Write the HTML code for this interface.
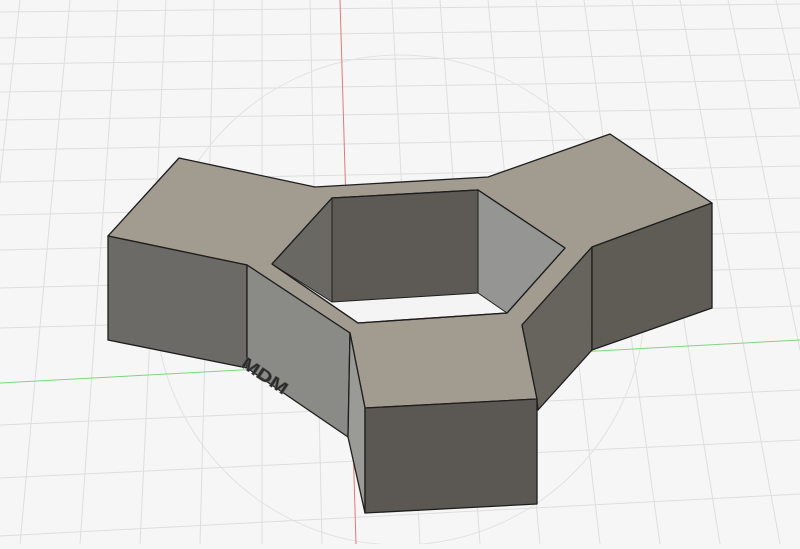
<!DOCTYPE html><html><head><style>html,body{margin:0;padding:0;background:#f5f5f5;overflow:hidden}</style></head><body>
<svg width="800" height="544" viewBox="0 0 800 544" xmlns="http://www.w3.org/2000/svg">
<rect width="800" height="544" fill="#f6f6f6"/>
<g stroke="#dedede" stroke-width="1">
<line x1="0" y1="12" x2="800" y2="4"/><line x1="0" y1="38" x2="800" y2="28"/><line x1="0" y1="64" x2="800" y2="54"/><line x1="0" y1="92" x2="800" y2="80"/><line x1="0" y1="120" x2="800" y2="108"/><line x1="0" y1="150" x2="800" y2="136"/><line x1="0" y1="182" x2="800" y2="166"/><line x1="0" y1="215" x2="800" y2="198"/><line x1="0" y1="250" x2="800" y2="232"/><line x1="0" y1="288" x2="800" y2="268"/><line x1="0" y1="328" x2="800" y2="306"/><line x1="0" y1="425" x2="800" y2="390"/><line x1="0" y1="478" x2="800" y2="440"/><line x1="0" y1="536" x2="800" y2="494"/>
<line x1="20" y1="0" x2="-40" y2="544"/><line x1="70" y1="0" x2="20" y2="544"/><line x1="118" y1="0" x2="80" y2="544"/><line x1="166" y1="0" x2="140" y2="544"/><line x1="214" y1="0" x2="200" y2="544"/><line x1="262" y1="0" x2="262" y2="544"/><line x1="310" y1="0" x2="322" y2="544"/><line x1="392" y1="0" x2="420" y2="544"/><line x1="440" y1="0" x2="480" y2="544"/><line x1="488" y1="0" x2="540" y2="544"/><line x1="536" y1="0" x2="600" y2="544"/><line x1="584" y1="0" x2="660" y2="544"/><line x1="632" y1="0" x2="720" y2="544"/><line x1="680" y1="0" x2="780" y2="544"/><line x1="728" y1="0" x2="840" y2="544"/><line x1="776" y1="0" x2="900" y2="544"/>
</g>
<circle cx="400" cy="300" r="245" fill="none" stroke="#e2e2e2" stroke-width="1"/>
<line x1="340" y1="0" x2="356" y2="544" stroke="#e07a7a" stroke-width="1"/>
<line x1="0" y1="383" x2="800" y2="340" stroke="#7fd67f" stroke-width="1"/>
<g stroke="#1e1e1e" stroke-width="1.3" stroke-linejoin="round">
<polygon points="179,158 315,187 488,177 610,134 712,203 592,247 522,325 537,399 365,408 350,333 247,265 108,236" fill="#a29b8f"/>
<polygon points="108,236 247,265 247,368 108,340" fill="#6c6a66"/>
<polygon points="247,265 350,333 348,437 247,368" fill="#8a8a87"/>
<polygon points="350,333 365,408 365,513 348,437" fill="#9a9a97"/>
<polygon points="365,408 537,399 537,504 365,513" fill="#5b5853"/>
<polygon points="522,325 592,247 592,350 538,410 537,399" fill="#67645e"/>
<polygon points="592,247 712,203 712,308 592,350" fill="#5f5c56"/>
<polygon points="272,264 332,198 478,190 565,248 507,313 358,323" fill="#f4f4f4"/>
<polygon points="332,198 478,190 478,293 332,302" fill="#5d5a55" stroke-width="1"/>
<polygon points="272,264 332,198 332,302" fill="#6a6863" stroke-width="1"/>
<polygon points="478,190 565,248 507,313 478,293" fill="#959593" stroke-width="1"/>
<polygon points="272,264 332,198 478,190 565,248 507,313 358,323" fill="none"/>
</g>
<text x="240" y="366" font-family="Liberation Sans, sans-serif" font-size="17" font-weight="bold" fill="#2a2a2a" stroke="#555" stroke-width="0.5" transform="rotate(34 240 366)" textLength="52" lengthAdjust="spacingAndGlyphs">MDM</text>
</svg>
</body></html>
